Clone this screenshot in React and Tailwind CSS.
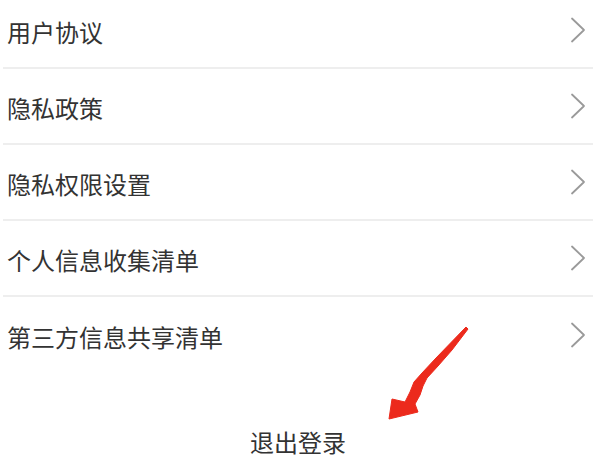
import React from "react";

const items = ["用户协议", "隐私政策", "隐私权限设置", "个人信息收集清单", "第三方信息共享清单"];

function Chevron() {
  return (
    <svg width="16" height="26" viewBox="0 0 16 26" fill="none">
      <path d="M2 1.5 L14 13 L2 24.5" stroke="#9a9a9a" strokeWidth="1.8" strokeLinecap="round" strokeLinejoin="round" />
    </svg>
  );
}

export default function App() {
  return (
    <div
      className="relative w-[600px] h-[467px] overflow-hidden bg-white text-[#333333]"
      style={{ fontFamily: '"Noto Sans CJK SC", "Noto Sans", sans-serif' }}
    >
      <div className="flex flex-col -mt-[7px]">
        {items.map((t, i) => (
          <div
            key={t}
            className={
              "flex h-[76px] items-center justify-between ml-[3px] mr-[7px] " +
              (i < items.length - 1 ? "border-b-2 border-[#eeeeee]" : "")
            }
          >
            <span className="pl-[4px] pt-[3px] text-[24px] leading-[24px]">{t}</span>
            <span className="mr-[7px] flex">
              <Chevron />
            </span>
          </div>
        ))}
      </div>
      <div className="mt-[57px] flex justify-center">
        <span className="text-[24px] leading-[24px] pr-[4px]">退出登录</span>
      </div>
      <svg
        className="absolute left-[380px] top-[320px]"
        width="95"
        height="105"
        viewBox="0 0 95 105"
      >
        <path
          d="M86 7 L88 9 L72 30 L58 46 L47 58 L43 66 L40 75 L35 84 L38 92 L9 99 L12 79 L25 82 L30 72 L34 62 L42 53 L56 38 Z"
          fill="#ec2a1c"
          stroke="#ec2a1c"
          strokeWidth="1"
          strokeLinejoin="round"
        />
      </svg>
    </div>
  );
}
